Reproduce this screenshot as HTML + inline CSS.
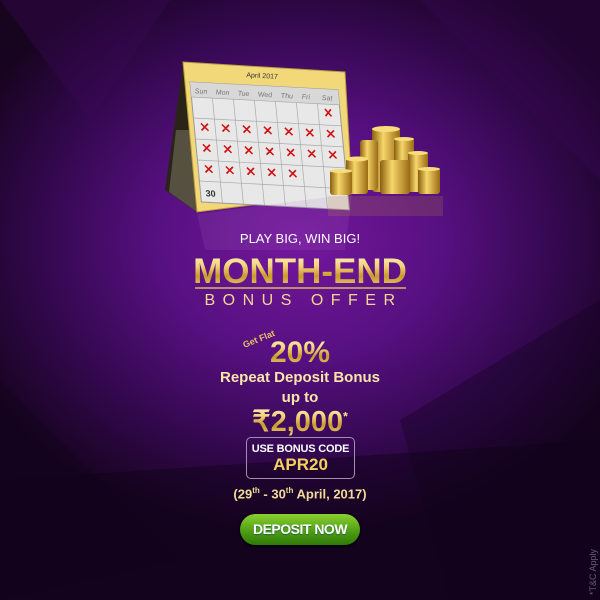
<!DOCTYPE html>
<html><head><style>
*{margin:0;padding:0;box-sizing:border-box}
body{width:600px;height:600px;overflow:hidden;font-family:"Liberation Sans",sans-serif;background:#1a0528}
#bg{position:absolute;inset:0;background:radial-gradient(ellipse 360px 300px at 300px 240px,#74179c 0%,#561080 40%,#33084e 72%,#17041f 100%)}
.t{position:absolute;left:0;width:600px;text-align:center;font-weight:bold;white-space:nowrap}
.gold{background:linear-gradient(#fff6c8 0%,#f2d27a 35%,#c99a2e 60%,#f5dc8a 100%);-webkit-background-clip:text;background-clip:text;color:transparent}
</style></head><body>
<div id="bg"></div>
<svg width="600" height="600" style="position:absolute;left:0;top:0">
<polygon points="0,0 170,0 90,120" fill="#3d0a5a" opacity=".35"/>
<polygon points="420,0 600,0 600,180" fill="#3a0858" opacity=".3"/>
<polygon points="0,380 180,560 0,600" fill="#12031e" opacity=".4"/>
<polygon points="400,420 600,300 600,600 450,600" fill="#12031e" opacity=".35"/>
<polygon points="0,480 600,440 600,600 0,600" fill="#100218" opacity=".45"/>
<polygon points="183,64 165,190 197,212" fill="#2a2418"/>
<polygon points="176,130 190,130 197,212 169,192" fill="#55503f"/>
<polygon points="183,62 345,72 352,192 197,212" fill="#f2d878" stroke="#b89a3a"/>
<g transform="matrix(1,0.053,0.095,1,190,82)">
<rect x="0" y="0" width="148" height="120" fill="#e8e8e8" stroke="#999"/>
<rect x="0" y="0" width="148" height="15" fill="#d8d8d8"/>
<g font-size="7" font-style="italic" fill="#777" font-family="Liberation Sans">
<text x="4" y="11">Sun</text><text x="25" y="11">Mon</text><text x="47" y="11">Tue</text><text x="67" y="11">Wed</text><text x="90" y="11">Thu</text><text x="111" y="11">Fri</text><text x="131" y="11">Sat</text></g>
<g stroke="#aaa" stroke-width=".7">
<line x1="0" y1="15" x2="148" y2="15"/><line x1="0" y1="36" x2="148" y2="36"/><line x1="0" y1="57" x2="148" y2="57"/><line x1="0" y1="78" x2="148" y2="78"/><line x1="0" y1="99" x2="148" y2="99"/>
<line x1="21" y1="15" x2="21" y2="120"/><line x1="42" y1="15" x2="42" y2="120"/><line x1="63" y1="15" x2="63" y2="120"/><line x1="84" y1="15" x2="84" y2="120"/><line x1="105" y1="15" x2="105" y2="120"/><line x1="126" y1="15" x2="126" y2="120"/></g>
<g stroke="#d01010" stroke-width="1.6">
<path d="M133,20l6,7m0,-7l-6,7"/>
<path d="M7,41l7,7m0,-7l-7,7M28,41l7,7m0,-7l-7,7M49,41l7,7m0,-7l-7,7M70,41l7,7m0,-7l-7,7M91,41l7,7m0,-7l-7,7M112,41l7,7m0,-7l-7,7M133,41l7,7m0,-7l-7,7"/>
<path d="M7,62l7,7m0,-7l-7,7M28,62l7,7m0,-7l-7,7M49,62l7,7m0,-7l-7,7M70,62l7,7m0,-7l-7,7M91,62l7,7m0,-7l-7,7M112,62l7,7m0,-7l-7,7M133,62l7,7m0,-7l-7,7"/>
<path d="M7,83l7,7m0,-7l-7,7M28,83l7,7m0,-7l-7,7M49,83l7,7m0,-7l-7,7M70,83l7,7m0,-7l-7,7M91,83l7,7m0,-7l-7,7"/>
</g>
<text x="5" y="114" font-size="9" font-weight="bold" fill="#333">30</text>
</g>
<text x="262" y="78" font-size="7" fill="#333" text-anchor="middle" transform="rotate(3 262 78)">April 2017</text>
<polygon points="197,214 352,194 345,250 205,250" fill="#b070c8" opacity=".15"/>
<defs><linearGradient id="cg" x1="0" x2="1"><stop offset="0" stop-color="#8a5e10"/><stop offset=".4" stop-color="#f7d66a"/><stop offset="1" stop-color="#9a6a14"/></linearGradient></defs>
<g fill="url(#cg)">
<rect x="372" y="128" width="28" height="64" rx="3"/>
<rect x="360" y="140" width="18" height="50" rx="3"/>
<rect x="394" y="138" width="20" height="54" rx="3"/>
<rect x="408" y="152" width="20" height="40" rx="3"/>
<rect x="346" y="158" width="22" height="36" rx="3"/>
<rect x="330" y="170" width="22" height="25" rx="3"/>
<rect x="418" y="168" width="22" height="26" rx="3"/>
<rect x="380" y="160" width="30" height="34" rx="3"/>
</g>
<g fill="#f7dd7a"><ellipse cx="386" cy="129" rx="14" ry="3"/><ellipse cx="404" cy="139" rx="10" ry="2"/><ellipse cx="418" cy="153" rx="10" ry="2"/><ellipse cx="357" cy="159" rx="11" ry="2.5"/><ellipse cx="429" cy="169" rx="11" ry="2"/><ellipse cx="341" cy="171" rx="11" ry="2"/></g>
<rect x="328" y="196" width="115" height="20" fill="#c89a30" opacity=".18"/>
<line x1="195" y1="288" x2="406" y2="288" stroke="#d8b860" stroke-width="1.5"/>
</svg>
<div class="t" style="top:231px;font-size:13px;color:#fff;font-weight:normal">PLAY BIG, WIN BIG!</div>
<div class="t gold" style="top:252px;font-size:35px">MONTH-END</div>
<div class="t" style="top:292px;font-size:16px;color:#f0d890;font-weight:normal;letter-spacing:7.5px;padding-left:7px">BONUS OFFER</div>
<div style="position:absolute;left:242px;top:334px;font-size:9px;color:#e6c060;transform:rotate(-22deg);font-weight:bold">Get Flat</div>
<div class="t gold" style="top:336px;font-size:30px">20%</div>
<div class="t" style="top:369px;font-size:15px;color:#f8e6a8">Repeat Deposit Bonus</div>
<div class="t" style="top:389px;font-size:15px;color:#f8e6a8">up to</div>
<div class="t gold" style="top:404px;font-size:29px">₹2,000<sup style="font-size:12px;color:#f0d890;-webkit-text-fill-color:#f0d890">*</sup></div>
<div style="position:absolute;left:246px;top:437px;width:109px;height:42px;border:1px solid #a090b0;border-radius:5px;text-align:center;white-space:nowrap">
<div style="font-size:11px;color:#fff;margin-top:5px;font-weight:bold;letter-spacing:-.2px">USE BONUS CODE</div>
<div style="font-size:17px;color:#f5d060;font-weight:bold;margin-top:0px">APR20</div></div>
<div class="t" style="top:486px;font-size:13px;color:#f0dc98">(29<sup style="font-size:8px">th</sup> - 30<sup style="font-size:8px">th</sup> April, 2017)</div>
<div style="position:absolute;left:240px;top:514px;width:120px;height:31px;border-radius:16px;background:linear-gradient(#8ad030,#4a9a14 60%,#2f7a08);box-shadow:0 1px 2px #000;color:#fff;font-weight:bold;font-size:14px;text-align:center;line-height:31px;letter-spacing:-.5px;text-shadow:0 1px 1px #264">DEPOSIT NOW</div>
<div style="position:absolute;left:563px;top:560px;width:60px;font-size:9px;color:#6a5a78;transform:rotate(-90deg);transform-origin:center;white-space:nowrap">*T&amp;C Apply</div>
</body></html>
